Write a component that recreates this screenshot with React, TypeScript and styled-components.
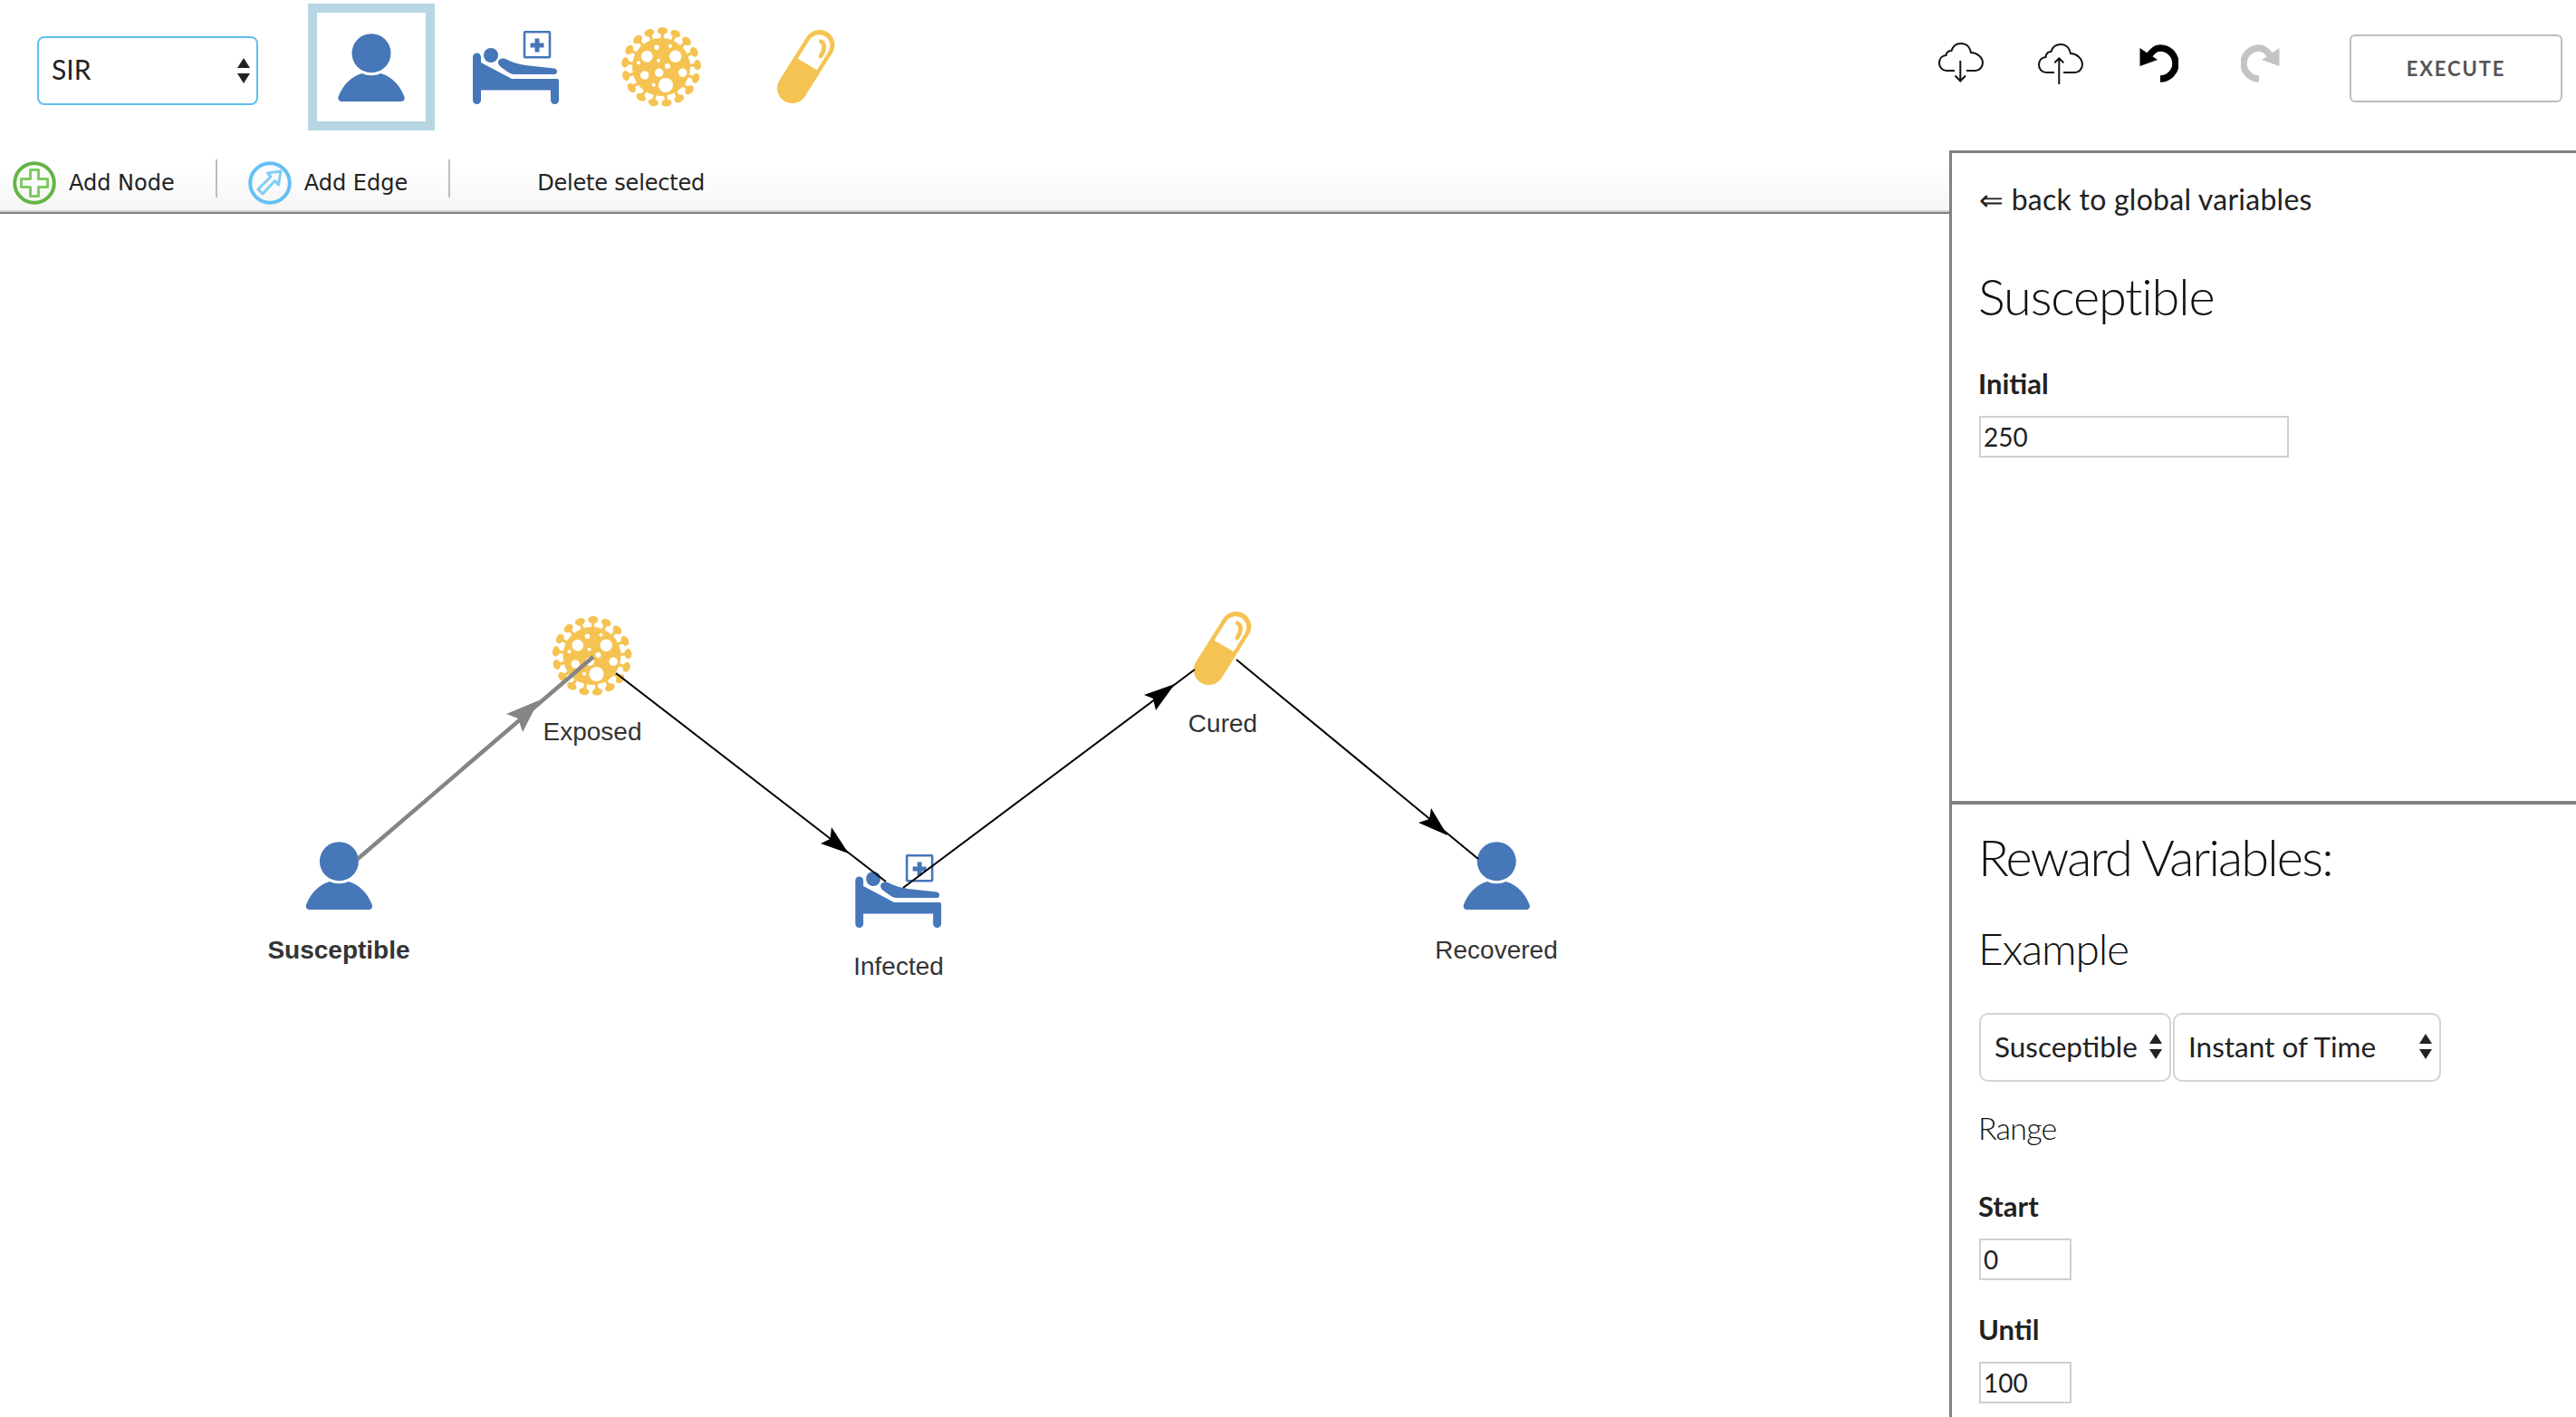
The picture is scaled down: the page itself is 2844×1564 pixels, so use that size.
import styled, { createGlobalStyle } from 'styled-components';

const BLUE = '#4677b8';
const YELLOW = '#f5c352';
const RALEWAY = `Lato, "Open Sans", sans-serif`;

const GlobalStyle = createGlobalStyle`
  html, body {
    margin: 0;
    padding: 0;
    background: white;
    overflow: hidden;
  }
  * {
    box-sizing: border-box;
  }
`;

const Page = styled.div`
  width: 2844px;
  height: 1564px;
  display: flex;
  flex-direction: column;
  font-family: ${RALEWAY};
  color: #222;
  overflow: hidden;
`;

const Header = styled.header`
  height: 166px;
  padding: 4px 15px 0 41px;
  display: flex;
  align-items: flex-start;
`;

const ModelSelect = styled.div`
  width: 244px;
  height: 76px;
  margin: 36px 55px 0 0;
  padding: 0 6px 5px 14px;
  border: 2px solid #5fc0ec;
  border-radius: 8px;
  display: flex;
  align-items: center;
  justify-content: space-between;
  font-size: 30px;

  svg {
    margin-top: 5px;
  }
`;

const Palette = styled.div`
  display: flex;
  gap: 20px;
`;

const PaletteItem = styled.div<{ $selected?: boolean }>`
  width: 140px;
  height: 140px;
  display: flex;
  align-items: center;
  justify-content: center;
  border: 10px solid ${(p) => (p.$selected ? '#b5d6e2' : 'transparent')};
`;

const Actions = styled.div`
  margin-left: auto;
  height: 140px;
  display: flex;
  align-items: center;
`;

const ActionIcon = styled.div`
  width: 110px;
  margin-bottom: 9px;
  display: flex;
  justify-content: center;
`;

const ExecuteButton = styled.button`
  width: 235px;
  height: 75px;
  margin: 3px 0 0 44px;
  background: white;
  border: 2px solid #bdbdbd;
  border-radius: 6px;
  font-family: ${RALEWAY};
  font-size: 22px;
  font-weight: 700;
  letter-spacing: 1.9px;
  color: #555;
`;

const Body = styled.div`
  flex: 1;
  display: flex;
  min-height: 0;
`;

const Workspace = styled.div`
  width: 2152px;
  display: flex;
  flex-direction: column;
`;

const ManipulationBar = styled.div`
  height: 70px;
  padding: 10px 0 0 14px;
  display: flex;
  align-items: flex-start;
  background: linear-gradient(to bottom, #ffffff 0%, #ffffff 25%, #f5f5f5 100%);
  border-bottom: 2px solid #808080;
  box-shadow: inset 0 -2px 0 #d4d4d4;
  font-family: 'DejaVu Sans', Verdana, sans-serif;
  font-size: 24px;
  color: #222;
`;

const BarButton = styled.div<{ $tight?: boolean }>`
  height: 48px;
  padding-top: 3px;
  display: flex;
  align-items: center;
  gap: 14px;
  letter-spacing: ${(p) => (p.$tight ? '-0.2px' : '0')};
`;

const BarSeparator = styled.div<{ $left: number; $right: number }>`
  width: 2px;
  height: 42px;
  margin: 0 ${(p) => p.$right}px 0 ${(p) => p.$left}px;
  background: #bdbdbd;
`;

const Canvas = styled.div`
  position: relative;
  flex: 1;
`;

const EdgeLayer = styled.svg`
  position: absolute;
  inset: 0;
  z-index: 1;
`;

const GraphNode = styled.div<{ $x: number; $y: number; $gap: number }>`
  position: absolute;
  left: ${(p) => p.$x}px;
  top: ${(p) => p.$y - 236}px;
  transform: translateX(-50%);
  display: flex;
  flex-direction: column;
  align-items: center;
  gap: ${(p) => p.$gap}px;
`;

const NodeLabel = styled.div<{ $bold?: boolean }>`
  font-family: 'Liberation Sans', Arial, sans-serif;
  font-size: 28px;
  line-height: 36px;
  font-weight: ${(p) => (p.$bold ? 700 : 400)};
  color: #343434;
  white-space: nowrap;
`;

const SidePanel = styled.aside`
  flex: 1;
  border-top: 3px solid #808080;
  border-left: 3px solid #808080;
  display: flex;
  flex-direction: column;
  position: relative;
  z-index: 2;
  background: white;
`;

const VariableSection = styled.section`
  height: 715px;
  padding: 31px 0 0 30px;
`;

const RewardSection = styled.section`
  flex: 1;
  padding: 23px 0 0 30px;
  border-top: 4px solid #808080;
`;

const BackLink = styled.div`
  padding-bottom: 2px;
  font-size: 32px;
  line-height: 40px;
  letter-spacing: 0.25px;
  font-weight: 400;
`;

const Title = styled.h2<{ $top: number; $spacing: number }>`
  margin: ${(p) => p.$top}px 0 0 -1px;
  font-size: 56px;
  line-height: 70px;
  font-weight: 300;
  letter-spacing: ${(p) => p.$spacing}px;
  color: #111;
`;

const Subtitle = styled.h3`
  margin: 36px 0 0 -1px;
  font-size: 48px;
  line-height: 60px;
  font-weight: 300;
  letter-spacing: -1.2px;
  color: #111;
`;

const FieldLabel = styled.label<{ $top: number }>`
  display: block;
  margin: ${(p) => p.$top}px 0 0 -1px;
  font-size: 31px;
  line-height: 40px;
  font-weight: 700;
`;

const ValueInput = styled.input<{ $width: number }>`
  display: block;
  width: ${(p) => p.$width}px;
  height: 46px;
  margin-top: 16px;
  padding: 0 3px;
  border: 2px solid #cfcfcf;
  font-family: ${RALEWAY};
  font-size: 28px;
  color: #222;
  background: white;
  outline: none;
`;

const SelectRow = styled.div`
  margin-top: 41px;
  display: flex;
  gap: 2px;
`;

const RewardSelect = styled.div<{ $width: number }>`
  width: ${(p) => p.$width}px;
  height: 76px;
  padding: 0 7px 2px 15px;
  border: 2px solid #d4d4d4;
  border-radius: 10px;
  display: flex;
  align-items: center;
  justify-content: space-between;
  font-size: 31.5px;
`;

const RangeLabel = styled.div`
  margin: 31px 0 0 -1px;
  padding-bottom: 2px;
  font-size: 34px;
  line-height: 40px;
  font-weight: 300;
  letter-spacing: -0.8px;
  color: #111;
`;

const UpDown = () => (
  <svg width="16" height="28" viewBox="0 0 16 28" fill="#222">
    <path d="M8 0 L15 11 H1 Z" />
    <path d="M8 28 L15 17 H1 Z" />
  </svg>
);

const PersonIcon = () => (
  <svg width="74" height="75" viewBox="0 0 74 75" fill={BLUE}>
    <circle cx="37" cy="21.7" r="21.5" />
    <path d="M0.5 70 C5 58 14 47 27 44 C32 47 42 47 47 44 C60 47 69 58 73.5 70 C74.5 73 72 75 70 75 L4 75 C2 75 -0.5 73 0.5 70 Z" />
  </svg>
);

const BedIcon = () => (
  <svg width="96" height="81" viewBox="0 0 96 81" fill={BLUE}>
    <path d="M0 29 a4.5 4.5 0 0 1 9 0 V35 L43 53 H93 a2 2 0 0 1 2 2 V76.5 a4.5 4.5 0 0 1 -9 0 V65.5 H9 V76.5 a4.5 4.5 0 0 1 -9 0 Z" />
    <circle cx="20" cy="27" r="8" />
    <path d="M31 31 C34 30 37 31 40 33 C48 36 52 37 58 38 L90 41.5 C94 42 94 48 90 48 L46 48 C42 48 40 46 38 45 L31 40 C27 37 27 32 31 31 Z" />
    <rect x="57" y="1.2" width="28" height="28" fill="white" stroke={BLUE} strokeWidth="2.6" rx="1" />
    <path d="M68.5 8.5 h5 v5 h5 v5 h-5 v5 h-5 v-5 h-5 v-5 h5 Z" />
  </svg>
);

const SPIKES = Array.from({ length: 17 }, (_, i) => (i * 360) / 17);
const HOLES = [
  [-15.7, -11.7, 6.3], [15.7, -11.7, 6.7], [5, 20, 8], [-18.3, 9, 4.7], [-2.3, 6.3, 4.7],
  [23.7, 6.3, 4.7], [-5, -21.7, 2.8], [10, -23.3, 2], [-3, -7.3, 2], [7, -1, 3],
  [-25, -4.7, 2], [-8.3, 19.7, 2],
];

const VirusIcon = () => (
  <svg width="90" height="88" viewBox="-45 -44 90 88" fill={YELLOW}>
    <circle r="32" />
    {SPIKES.map((a) => (
      <g key={a} transform={`rotate(${a + 2})`}>
        <rect x="-1.6" y="-39" width="3.2" height="10" />
        <ellipse cx="0" cy="-40" rx="5.6" ry="4" />
      </g>
    ))}
    {HOLES.map(([x, y, r]) => (
      <circle key={`${x}-${y}`} cx={x} cy={y} r={r} fill="white" />
    ))}
  </svg>
);

const PillIcon = () => (
  <svg width="65" height="82" viewBox="0 0 65 82">
    <path d="M46.7 16.7 L16.7 64.3" stroke={YELLOW} strokeWidth="33.4" strokeLinecap="round" fill="none" />
    <path d="M22.7 31.7 L36.3 10.2 A12.3 12.3 0 0 1 57.1 23.2 L44 44.3 Z" fill="white" />
    <path d="M48.3 12.7 C53 15 53 22 48 29" stroke={YELLOW} strokeWidth="4.6" strokeLinecap="round" fill="none" />
  </svg>
);

const CloudIcon = ({ up }: { up?: boolean }) => (
  <svg width="50" height="46" viewBox="0 0 50 46" fill="none" stroke="#111" strokeWidth="2">
    {up ? (
      <>
        <path d="M18 33 H9 C4 33 1 29 1 24.5 C1 20 4 16.5 8.5 16 C9 12 11 10 14.5 10 C16 5 20 2 25 2 C31 2 35 6 36 12 C42 12 49 17 49 24.5 C49 29 45 33 41 33 H28" />
        <path d="M23.3 46 V17.3 M18.3 22.3 L23.3 17.3 L28.3 22.3" />
      </>
    ) : (
      <>
        <path d="M18 31 H9 C4 31 1 27 1 22.5 C1 18 4 14.5 8.5 14 C9 11 11 9 14.5 9 C16 4 20 1 25 1 C31 1 35 5 36 11 C42 11 49 16 49 22.5 C49 27 45 31 41 31 H31" />
        <path d="M24.3 20 V43 M18.5 36.5 L24.3 42.5 L30 36.5" />
      </>
    )}
  </svg>
);

const ArrowTurn = styled.svg<{ $redo?: boolean }>`
  transform: ${(p) => (p.$redo ? 'scaleX(-1)' : 'translateX(-2px)')};
`;

const TurnIcon = ({ redo }: { redo?: boolean }) => {
  const color = redo ? '#c4c4c4' : '#000';
  return (
    <ArrowTurn $redo={redo} width="43" height="42" viewBox="0 0 43 42">
      <path d="M9 15 C13 8 18 4 23 4 A17 17 0 0 1 23 38" stroke={color} strokeWidth="7.5" fill="none" />
      <path d="M0.5 4 L0.5 24 L20 17 Z" fill={color} />
    </ArrowTurn>
  );
};

const AddNodeIcon = () => (
  <svg width="48" height="48" viewBox="0 0 48 48" fill="none" stroke="#63b545">
    <circle cx="24" cy="24" r="21.8" strokeWidth="4" />
    <path d="M19.5 9.5 h9 v10 h10 v9 h-10 v10 h-9 v-10 h-10 v-9 h10 Z" stroke="#7fcb63" strokeWidth="3" strokeLinejoin="round" />
  </svg>
);

const AddEdgeIcon = () => (
  <svg width="48" height="48" viewBox="0 0 48 48" fill="none" stroke="#63c0f5">
    <circle cx="24" cy="24" r="21.8" strokeWidth="4" />
    <path d="M11 31 L25 17 L21.5 13 L36 11 L33.5 26 L29.5 21.5 L16 36 Z" stroke="#7fcdf8" strokeWidth="3" strokeLinejoin="round" />
  </svg>
);

const edges = [
  { from: [395, 948], to: [655, 725], head: '595,773 559,788 572,793 577,808', color: '#858585', width: 4.5 },
  { from: [680, 743], to: [978, 973], head: '937,942 918,913 916.5,926 906,931', color: '#000', width: 2 },
  { from: [997, 980], to: [1319, 739], head: '1297,755 1263,767 1273,771 1276,784', color: '#000', width: 2 },
  { from: [1365, 728], to: [1632, 948], head: '1598,922 1580,892 1578,904 1566,908', color: '#000', width: 2 },
];

const App = () => {
  return (
    <>
      <GlobalStyle />
      <Page>
        <Header>
          <ModelSelect>
            SIR
            <UpDown />
          </ModelSelect>
          <Palette>
            <PaletteItem $selected>
              <PersonIcon />
            </PaletteItem>
            <PaletteItem>
              <BedIcon />
            </PaletteItem>
            <PaletteItem>
              <VirusIcon />
            </PaletteItem>
            <PaletteItem>
              <PillIcon />
            </PaletteItem>
          </Palette>
          <Actions>
            <ActionIcon>
              <CloudIcon />
            </ActionIcon>
            <ActionIcon>
              <CloudIcon up />
            </ActionIcon>
            <ActionIcon>
              <TurnIcon />
            </ActionIcon>
            <ActionIcon>
              <TurnIcon redo />
            </ActionIcon>
            <ExecuteButton>EXECUTE</ExecuteButton>
          </Actions>
        </Header>
        <Body>
          <Workspace>
            <ManipulationBar>
              <BarButton>
                <AddNodeIcon />
                Add Node
              </BarButton>
              <BarSeparator $left={45} $right={34} />
              <BarButton>
                <AddEdgeIcon />
                Add Edge
              </BarButton>
              <BarSeparator $left={45} $right={96} />
              <BarButton $tight>Delete selected</BarButton>
            </ManipulationBar>
            <Canvas>
              <GraphNode $x={374} $y={929} $gap={27}>
                <PersonIcon />
                <NodeLabel $bold>Susceptible</NodeLabel>
              </GraphNode>
              <GraphNode $x={654} $y={680} $gap={22}>
                <VirusIcon />
                <NodeLabel>Exposed</NodeLabel>
              </GraphNode>
              <GraphNode $x={992} $y={943} $gap={25}>
                <BedIcon />
                <NodeLabel>Infected</NodeLabel>
              </GraphNode>
              <GraphNode $x={1350} $y={675} $gap={24}>
                <PillIcon />
                <NodeLabel>Cured</NodeLabel>
              </GraphNode>
              <GraphNode $x={1652} $y={929} $gap={27}>
                <PersonIcon />
                <NodeLabel>Recovered</NodeLabel>
              </GraphNode>
              <EdgeLayer width="2152" height="1328" viewBox="0 236 2152 1328">
                {edges.map((e) => (
                  <g key={e.head}>
                    <line x1={e.from[0]} y1={e.from[1]} x2={e.to[0]} y2={e.to[1]} stroke={e.color} strokeWidth={e.width} />
                    <polygon points={e.head} fill={e.color} />
                  </g>
                ))}
              </EdgeLayer>
            </Canvas>
          </Workspace>
          <SidePanel>
            <VariableSection>
              <BackLink>⇐ back to global variables</BackLink>
              <Title $top={50} $spacing={-1.2}>Susceptible</Title>
              <FieldLabel $top={41}>Initial</FieldLabel>
              <ValueInput $width={342} defaultValue="250" />
            </VariableSection>
            <RewardSection>
              <Title $top={0} $spacing={-1.85}>Reward Variables:</Title>
              <Subtitle>Example</Subtitle>
              <SelectRow>
                <RewardSelect $width={212}>
                  Susceptible
                  <UpDown />
                </RewardSelect>
                <RewardSelect $width={296}>
                  Instant of Time
                  <UpDown />
                </RewardSelect>
              </SelectRow>
              <RangeLabel>Range</RangeLabel>
              <FieldLabel $top={44}>Start</FieldLabel>
              <ValueInput $width={102} defaultValue="0" />
              <FieldLabel $top={34}>Until</FieldLabel>
              <ValueInput $width={102} defaultValue="100" />
            </RewardSection>
          </SidePanel>
        </Body>
      </Page>
    </>
  );
};

export default App;
